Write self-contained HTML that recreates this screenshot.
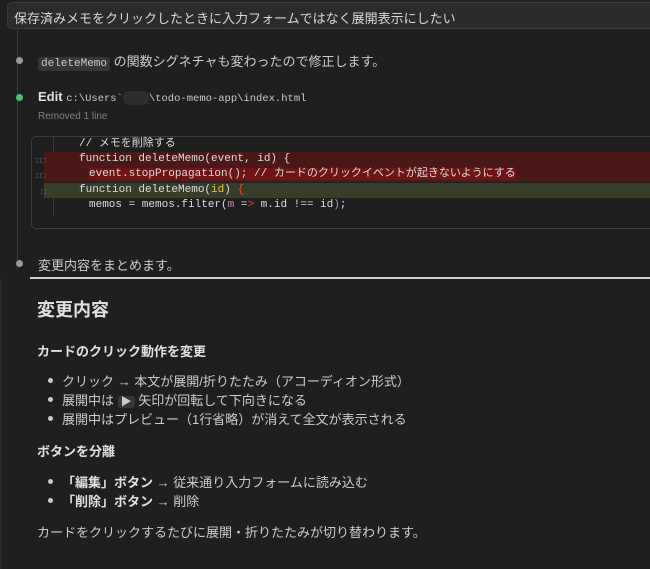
<!DOCTYPE html>
<html><head><meta charset="utf-8"><style>
*{margin:0;padding:0;box-sizing:border-box}
body{width:650px;height:567px;background:#1f1f1f;color:#cccccc;font-family:"Liberation Sans","Noto Sans CJK JP",sans-serif;font-size:13px;position:relative;overflow:hidden}
.abs{position:absolute;white-space:nowrap}
.title{position:absolute;left:7px;top:2px;width:660px;height:27px;background:#2b2b2b;border:1px solid #3c3c3c;border-radius:5px;padding:5px 0 0 6px;font-size:13px;color:#d8d8d8}
.vline{position:absolute;left:17px;top:29px;width:1px;height:240px;background:#3a3a3a}
.dot{position:absolute;left:16px;width:7px;height:7px;border-radius:50%;background:#9a9a9a}
.code{font-family:"Liberation Mono","Noto Sans CJK JP",monospace;font-size:11px}
.chip{background:#353535;border-radius:3px;padding:1px 3px;font-size:11px}
.box{position:absolute;left:31px;top:136px;width:640px;height:93px;border:1px solid #3d3d3d;border-radius:5px;background:#1e1e1e;overflow:hidden}
.row{position:absolute;left:12px;width:630px;height:15px;line-height:15px;padding-left:35px;color:#dcdcdc}
.g{position:absolute;left:6px;font-size:8px;color:#777}
ul{list-style:none}
li{position:absolute;left:62px;white-space:nowrap}
li:before{content:"";position:absolute;left:-14px;top:7px;width:5px;height:5px;border-radius:50%;background:#cccccc}
b{color:#e0e0e0}
</style></head><body>
<div class="title">保存済みメモをクリックしたときに入力フォームではなく展開表示にしたい</div>
<div class="vline"></div>
<div class="dot" style="top:57px"></div>
<div class="abs" style="left:38px;top:51px"><span class="code chip">deleteMemo</span> の関数シグネチャも変わったので修正します。</div>
<div class="dot" style="top:94px;background:#4fbf6f"></div>
<div class="abs" style="left:38px;top:89px"><b style="font-size:13px">Edit</b> <span class="code" style="font-size:10.5px;color:#ccc">c:\Users`<span style="display:inline-block;width:26px;height:14px;background:#2e2e2e;border-radius:6px;vertical-align:middle"></span>\todo-memo-app\index.html</span></div>
<div class="abs" style="left:38px;top:111px;font-size:10px;color:#7f7f7f">Removed 1 line</div>
<div class="box code">
 <div style="position:absolute;left:21px;top:0;width:1px;height:80px;background:#3a3a3a"></div>
 <div class="row" style="top:0">// メモを削除する</div>
 <div class="row" style="top:15px;background:#4b1818">function deleteMemo(event, id) {</div>
 <div class="row" style="top:30px;background:#4b1818;padding-left:45px"><span style="background:#6e1414">event.stopPropagation(); // カードのクリックイベントが起きないようにする</span></div>
 <div class="row" style="top:46px;background:#373d29">function deleteMemo(<span style="color:#e8c64a">id</span>) <span style="color:#e04a3a">{</span></div>
 <div class="row" style="top:61px;padding-left:45px">memos = memos.filter(<span style="color:#c586c0">m</span> =<span style="color:#e04a3a">&gt;</span> m.id !== id<span style="color:#c586c0">)</span>;</div>
 <div class="g" style="top:20px;left:4px">□□</div><div class="g" style="top:35px;left:4px">□□</div><div class="g" style="top:51px;left:9px">□</div>
</div>
<div class="dot" style="top:260px"></div>
<div class="abs" style="left:38px;top:255px">変更内容をまとめます。</div>
<div class="abs" style="left:30px;top:277px;width:640px;height:2px;background:#cfcfcf"></div>
<div class="abs" style="left:0;top:279px;width:2px;height:290px;background:#2a2a2a"></div>
<div class="abs" style="left:37px;top:296px;font-size:18px;font-weight:bold;color:#e0e0e0">変更内容</div>
<div class="abs" style="left:37px;top:341px;font-weight:bold;color:#e0e0e0">カードのクリック動作を変更</div>
<ul>
<li style="top:371px">クリック → 本文が展開/折りたたみ（アコーディオン形式）</li>
<li style="top:390px">展開中は <span style="background:#383838;border-radius:3px;padding:0 3px;font-size:11px">▶</span> 矢印が回転して下向きになる</li>
<li style="top:409px">展開中はプレビュー（1行省略）が消えて全文が表示される</li>
</ul>
<div class="abs" style="left:37px;top:441px;font-weight:bold;color:#e0e0e0">ボタンを分離</div>
<ul>
<li style="top:472px"><b>「編集」ボタン</b> → 従来通り入力フォームに読み込む</li>
<li style="top:491px"><b>「削除」ボタン</b> → 削除</li>
</ul>
<div class="abs" style="left:37px;top:522px">カードをクリックするたびに展開・折りたたみが切り替わります。</div>
</body></html>
